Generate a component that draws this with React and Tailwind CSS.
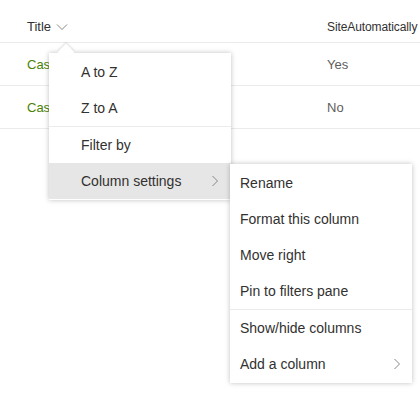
import React from "react";

const font = { fontFamily: '"Segoe UI", "Liberation Sans", Arial, sans-serif' };

function Chevron({ className }) {
  return (
    <svg width="8" height="12" viewBox="0 0 8 12" className={className}>
      <path d="M1.5 1 L6.5 6 L1.5 11" fill="none" stroke="#8a8886" strokeWidth="1" />
    </svg>
  );
}

function Item({ label, active, sub }) {
  return (
    <div
      className={`flex h-9 items-center justify-between pl-8 pr-3 text-[14px] text-[#323130] ${
        active ? "bg-[#e6e6e6]" : ""
      }`}
    >
      <span>{label}</span>
      {sub && <Chevron />}
    </div>
  );
}

function SubItem({ label, sub }) {
  return (
    <div className="flex h-9 items-center justify-between pl-[10px] pr-[11px] text-[14px] text-[#323130]">
      <span>{label}</span>
      {sub && <Chevron />}
    </div>
  );
}

export default function App() {
  const rows = [
    { title: "Case", site: "Yes" },
    { title: "Case", site: "No" },
  ];

  return (
    <div className="relative h-[393px] w-[420px] overflow-hidden bg-white" style={font}>
      <div className="flex h-[43px] items-center border-b border-[#edebe9] pt-[12px] text-[13px] text-[#323130]">
        <div className="flex w-[327px] shrink-0 items-center pl-[27px]">
          <span>Title</span>
          <svg width="12" height="8" viewBox="0 0 12 8" className="ml-[5px]">
            <path d="M1 1.5 L6 6.5 L11 1.5" fill="none" stroke="#8a8886" strokeWidth="1" />
          </svg>
        </div>
        <div className="whitespace-nowrap text-[12px] tracking-[-0.1px]">SiteAutomatically</div>
      </div>
      {rows.map((r, i) => (
        <div key={i} className="flex h-[43px] items-center border-b border-[#edebe9] pt-px text-[13px]">
          <div className="w-[327px] shrink-0 pl-[27px] text-[#498205]">{r.title}</div>
          <div className="text-[#605e5c]">{r.site}</div>
        </div>
      ))}

      <div className="absolute left-[49px] top-[53px] w-[182px] bg-white py-px shadow-[0_0_5px_rgba(0,0,0,0.25)]">
        <div className="absolute -top-[7px] left-[11px] h-3 w-3 rotate-45 bg-white shadow-[-1px_-1px_2px_rgba(0,0,0,0.12)]" />
        <div className="relative">
          <Item label="A to Z" />
          <Item label="Z to A" />
          <div className="h-px bg-[#edebe9]" />
          <Item label="Filter by" />
          <Item label="Column settings" active sub />
        </div>
      </div>

      <div className="absolute left-[230px] top-[164px] w-[182px] bg-white py-px shadow-[0_0_5px_rgba(0,0,0,0.25)]">
        <SubItem label="Rename" />
        <SubItem label="Format this column" />
        <SubItem label="Move right" />
        <SubItem label="Pin to filters pane" />
        <div className="h-px bg-[#edebe9]" />
        <SubItem label="Show/hide columns" />
        <SubItem label="Add a column" sub />
      </div>
    </div>
  );
}
